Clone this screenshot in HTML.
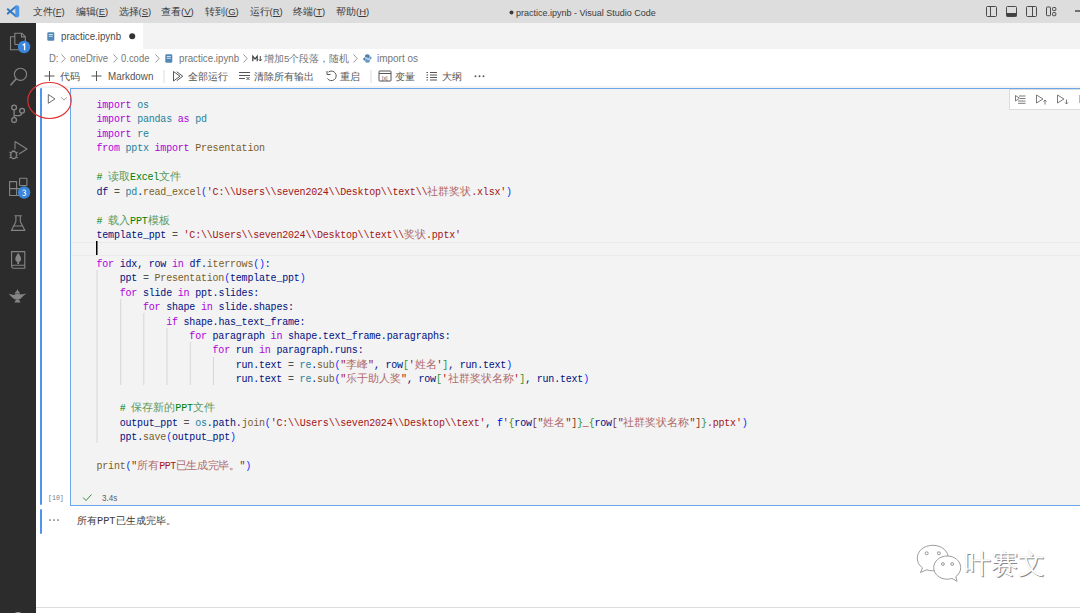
<!DOCTYPE html>
<html><head><meta charset="utf-8">
<style>
*{margin:0;padding:0;box-sizing:border-box}
html,body{width:1080px;height:613px;overflow:hidden;background:#fff;font-family:"Liberation Sans",sans-serif;position:relative}
.abs{position:absolute}
svg{position:absolute;overflow:visible}
#title{left:0;top:0;width:1080px;height:23px;background:#dddddd}
.menu{position:absolute;top:6px;font-size:9.5px;line-height:11px;color:#3b3b3b;white-space:nowrap}
.menu u{text-decoration:none;border-bottom:1px solid #3b3b3b;line-height:8px;display:inline-block}
#wtitle{left:516px;top:7px;font-size:9.6px;transform:scaleX(0.9375);transform-origin:0 0;line-height:11px;color:#3b3b3b;white-space:nowrap}
#act{left:0;top:23px;width:36px;height:590px;background:#2c2c2c}
#tabs{left:36px;top:23px;width:1044px;height:26px;background:#f3f3f3}
#tab1{left:36px;top:23px;width:107px;height:26px;background:#fff}
.ui{position:absolute;font-size:9.6px;line-height:11px;color:#767676;white-space:nowrap}
.tb{position:absolute;font-size:9.6px;line-height:11px;color:#555555;white-space:nowrap}
#toolbarline{left:36px;top:86px;width:1044px;height:2px;background:#f3f3f3}
#leftbar1{left:39.5px;top:88px;width:2.5px;height:417px;background:#4e95ee;border-radius:1px}
#leftbar2{left:39.5px;top:509px;width:2.5px;height:25px;background:#4e95ee;border-radius:1px}
#cell{left:70px;top:88px;width:1010px;height:418px;background:#f3f3f3;border-top:1px solid #6aa6ea;border-left:1px solid #6aa6ea;border-bottom:1px solid #6aa6ea}
#code{left:96.5px;top:99px;font-family:"Liberation Mono",monospace;font-size:10px;line-height:14.44px;letter-spacing:-0.2px;color:#001080;white-space:pre}
i.z{font-style:normal;font-weight:300;font-size:10.55px;letter-spacing:0;line-height:0}
.c i.z{color:#5f9a5f}.s i.z{color:#b06a6a}
.k{color:#af00db}.m{color:#267f99}.s{color:#a31515}.c{color:#008000}.f{color:#795e26}.v{color:#001080}.p{color:#0431fa}.o{color:#505050}.g{color:#319331}.b{color:#7b3814}.kf{color:#0000ff}
#celltb{left:1009px;top:89px;width:80px;height:21px;background:#fff;border:1px solid #dcdcdc}
#bottomline{left:36px;top:607px;width:1044px;height:1px;background:#dcdcdc}
</style></head><body>
<div id="title" class="abs"></div>
<!-- vscode logo -->
<svg style="left:0;top:0" width="28" height="23" viewBox="0 0 28 23">
<g stroke="#3277c6" stroke-width="2" stroke-linecap="round" fill="none"><path d="M7.8 9.2 L16 16.2"/><path d="M7.8 13.6 L16 6.4"/></g>
<path d="M15.3 6.2 L17 5.2 Q19.2 5.6 19.2 7 L19.2 15.6 Q19.2 17 17 17.4 L15.3 16.4 Z" fill="#4a95e8"/>
</svg>
<div class="menu" style="left:32.5px">文件(<u>F</u>)</div>
<div class="menu" style="left:75.5px">编辑(<u>E</u>)</div>
<div class="menu" style="left:118.5px">选择(<u>S</u>)</div>
<div class="menu" style="left:161px">查看(<u>V</u>)</div>
<div class="menu" style="left:205px">转到(<u>G</u>)</div>
<div class="menu" style="left:249.5px">运行(<u>R</u>)</div>
<div class="menu" style="left:293px">终端(<u>T</u>)</div>
<div class="menu" style="left:336px">帮助(<u>H</u>)</div>
<svg style="left:509px;top:10px" width="5" height="5"><circle cx="2.5" cy="2.5" r="2" fill="#3b3b3b"/></svg>
<div id="wtitle" class="abs">practice.ipynb - Visual Studio Code</div>
<!-- layout icons -->
<svg style="left:986px;top:6px" width="72" height="12" viewBox="0 0 72 12">
<g fill="none" stroke="#4a4a4a" stroke-width="1">
<rect x="0.5" y="0.5" width="10" height="10" rx="1"/><line x1="4.5" y1="0.5" x2="4.5" y2="10.5"/>
<rect x="20.5" y="0.5" width="10" height="10" rx="1"/>
<rect x="40.5" y="0.5" width="10" height="10" rx="1"/><line x1="46.5" y1="0.5" x2="46.5" y2="10.5"/>
<rect x="60.5" y="1" width="4" height="8.7" rx="0.8"/><rect x="66.6" y="1.5" width="3.2" height="3.1" rx="0.7"/><rect x="66.6" y="6.6" width="3.2" height="3.1" rx="0.7"/>
</g>
<rect x="20.5" y="7" width="10" height="3.5" fill="#424242"/>
</svg>
<div class="abs" style="left:1075px;top:10.4px;width:5px;height:1.3px;background:#707070"></div>
<div id="act" class="abs"></div>
<div id="tabs" class="abs"></div>
<div id="tab1" class="abs"></div>
<!-- activity bar icons -->
<svg style="left:0;top:23px" width="36" height="590" viewBox="0 23 36 590">
<g fill="none" stroke="#858585" stroke-width="1.1" stroke-linejoin="round">
<!-- explorer -->
<path d="M14.8 44.5 L14.8 33.2 L21.8 33.2 L25.3 36.7 L25.3 41"/>
<path d="M21.5 33.5 L21.5 36.9 L25 36.9"/>
<path d="M14.8 44.5 L18.5 44.5"/>
<path d="M14.5 36.8 L10.5 36.8 L10.5 49.8 L19 49.8"/>
<!-- search -->
<circle cx="20.5" cy="74.3" r="6.1"/>
<path d="M16.3 78.8 L10.5 85.3" stroke-width="1.5"/>
<!-- source control -->
<g stroke-width="1.3"><circle cx="14.1" cy="107.5" r="2.4"/>
<circle cx="14.1" cy="120.1" r="2.4"/>
<circle cx="22.1" cy="110.8" r="2.4"/>
<path d="M14.1 110 L14.1 117.6"/>
<path d="M21.8 113.2 Q21.3 115.6 19 115.6 L14.5 115.6"/></g>
<!-- run debug -->
<path d="M15 141.5 L27 149 L19 154"/>
<path d="M15 141.5 L15 149.3"/>
<ellipse cx="13.6" cy="155" rx="2.8" ry="3.6"/>
<path d="M9.5 152 L11 153 M9.5 155 L11 155 M9.5 158 L11 157 M17.7 152 L16.2 153 M17.7 155 L16.2 155 M17.7 158 L16.2 157 M12 151 L15 151"/>
<!-- extensions -->
<path d="M9.6 181.6 L16.6 181.6 L16.6 188.6 L23 188.6 L23 195.5 L9.6 195.5 Z M9.6 188.6 L16.6 188.6 L16.6 195.5"/>
<rect x="19.6" y="178.3" width="7.3" height="7.2" rx="0.6"/>
<!-- flask -->
<path d="M15.9 216 L15.9 221.5 L11.4 230.4 L24.9 230.4 L20.3 221.5 L20.3 216 M14.5 215.8 L21.8 215.8 M13.4 226 L22.9 226"/>
<!-- book -->
<path d="M11.6 251.6 L24.8 251.6 L24.8 268.2 L13.2 268.2 Q11.6 268.2 11.6 266.6 Z M11.6 266.3 Q11.6 265.3 13.2 265.3 L24.8 265.3"/>
</g>
<g fill="#858585">
<path d="M18.2 253 Q15.3 256.5 15.3 259 Q15.3 261.8 18.2 262.2 Q21.1 261.8 21.1 259 Q21.1 256.5 18.2 253 Z"/>
<path d="M17.7 261.5 L18.7 261.5 L19.3 264 L17.1 264 Z"/>
<!-- lamp -->
<path d="M17.5 289 L18.3 291 Q20 292 20 293.5 L14.5 293.5 Q15 292 16.7 291 Z"/>
<path d="M8.8 293.8 Q11.5 294.8 14 295 Q15.5 293.8 17.5 293.8 Q19.5 293.8 21 294.6 Q24 294.2 26.6 293.6 Q23.5 295.3 22.3 297 Q20.8 299.6 17.5 299.6 Q13.8 299.6 12.3 297.4 Q10.5 296.3 8.8 293.8 Z"/>
<path d="M16 299.5 L19 299.5 L20.5 302.5 L14.5 302.5 Z"/>
</g>
<ellipse cx="18" cy="615.5" rx="4" ry="3.5" fill="#a0a0a0"/>
<!-- badges -->
<circle cx="24.1" cy="47" r="6.2" fill="#3a86dc"/>
<path d="M22.6 45.3 L24.6 44 L24.6 50.3" fill="none" stroke="#fff" stroke-width="1.3"/>
<circle cx="24.1" cy="192.5" r="6.2" fill="#3a86dc"/>
<path d="M22.6 190.7 Q23.3 190 24.2 190 Q25.7 190 25.7 191.3 Q25.7 192.6 23.9 192.6 Q25.9 192.6 25.9 194.1 Q25.9 195.6 24.1 195.6 Q23.1 195.6 22.5 195" fill="none" stroke="#fff" stroke-width="1"/>
</svg>
<!-- tab -->
<svg style="left:47px;top:31.5px" width="8" height="9" viewBox="0 0 8 9"><rect x="0.3" y="0.3" width="7" height="8.4" rx="1.2" fill="#5288b6"/><rect x="1.8" y="2" width="4" height="0.9" fill="#dde8f2"/><rect x="1.8" y="3.8" width="4" height="0.9" fill="#dde8f2"/></svg>
<div class="ui" style="left:61px;top:31px;font-size:11px;color:#4a4a4a;transform:scaleX(0.885);transform-origin:0 0">practice.ipynb</div>
<svg style="left:129px;top:33px" width="7" height="7"><circle cx="3.2" cy="3.2" r="3" fill="#333"/></svg>
<!-- breadcrumb -->
<div class="ui" style="left:48.5px;top:53px;font-size:11px;transform:scaleX(0.86);transform-origin:0 0">D:</div>
<div class="ui" style="left:70px;top:53px;font-size:11px;transform:scaleX(0.865);transform-origin:0 0">oneDrive</div>
<div class="ui" style="left:121px;top:53px;font-size:11px;transform:scaleX(0.86);transform-origin:0 0">0.code</div>
<svg style="left:165px;top:53.5px" width="8" height="9" viewBox="0 0 8 9"><rect x="0.3" y="0.3" width="7" height="8.4" rx="1.2" fill="#5288b6"/><rect x="1.8" y="2" width="4" height="0.9" fill="#dde8f2"/><rect x="1.8" y="3.8" width="4" height="0.9" fill="#dde8f2"/></svg>
<div class="ui" style="left:178.5px;top:53px;font-size:11px;transform:scaleX(0.887);transform-origin:0 0">practice.ipynb</div>
<svg style="left:251.5px;top:55px" width="12" height="8" viewBox="0 0 12 8"><path d="M0.8 6.3 L0.8 1.2 L3 4 L5.2 1.2 L5.2 6.3" fill="none" stroke="#3b3b3b" stroke-width="1.2"/><path d="M8.3 1 L8.3 5.8 M6.8 4.3 L8.3 6 L9.8 4.3" fill="none" stroke="#3b3b3b" stroke-width="0.9"/></svg>
<div class="ui" style="left:264px;top:52.5px;font-size:9.75px">增加5个段落，随机</div>
<svg style="left:363px;top:54px" width="9" height="9" viewBox="0 0 9 9"><path d="M4.3 0.3 Q2 0.3 2 1.8 L2 3 L4.5 3 L4.5 3.5 L1.3 3.5 Q0.2 3.6 0.2 5 Q0.2 6.6 1.4 6.6 L2 6.6 L2 5.3 Q2 4.2 3.2 4.2 L5.6 4.2 Q6.7 4.2 6.7 3.1 L6.7 1.8 Q6.7 0.3 4.3 0.3 Z" fill="#4e7fae"/><path d="M4.5 8.7 Q6.8 8.7 6.8 7.2 L6.8 6 L4.3 6 L4.3 5.5 L7.5 5.5 Q8.6 5.4 8.6 4 Q8.6 2.4 7.4 2.4 L6.8 2.4 L6.8 3.7 Q6.8 4.8 5.6 4.8 L3.2 4.8 Q2.1 4.8 2.1 5.9 L2.1 7.2 Q2.1 8.7 4.5 8.7 Z" fill="#6a9cc6"/></svg>
<div class="ui" style="left:376.5px;top:53px;font-size:11px;transform:scaleX(0.905);transform-origin:0 0">import os</div>
<svg style="left:0;top:0" width="1080" height="100">
<g fill="none" stroke="#8a8a8a" stroke-width="0.9">
<path d="M61.5 54.5 L65.2 58.5 L61.5 62.5"/>
<path d="M113.5 54.5 L117.2 58.5 L113.5 62.5"/>
<path d="M155.5 54.5 L159.2 58.5 L155.5 62.5"/>
<path d="M243.5 54.5 L247.2 58.5 L243.5 62.5"/>
<path d="M353.5 54.5 L357.2 58.5 L353.5 62.5"/>
</g>
</svg>
<!-- toolbar -->
<div id="toolbarline" class="abs"></div>
<svg style="left:0;top:0" width="1080" height="100">
<g fill="none" stroke="#555" stroke-width="1">
<path d="M49.5 71 L49.5 81 M44.5 76 L54.5 76"/>
<path d="M96.5 71 L96.5 81 M91.5 76 L101.5 76"/>
<path d="M173.5 71.5 L173.5 81 L180 76.25 Z M176.8 71.8 L182.8 76.25 L176.8 80.7"/>
<path d="M239 72.5 L250 72.5 M239 75.5 L250 75.5 M239 78.5 L245 78.5 M246.5 77 L249.5 80 M249.5 77 L246.5 80"/>
<path d="M328.5 72 A4.8 4.8 0 1 1 327.4 78.5 M327 71 L327 74.5 L330.5 74.5"/>
<rect x="379" y="71" width="12" height="10" rx="0.5"/><path d="M379 73.5 L391 73.5"/>
<path d="M430 72.5 L437 72.5 M430 75 L437 75 M430 77.5 L437 77.5 M430 80 L437 80 M426.5 72.5 L428 72.5 M426.5 75 L428 75 M426.5 77.5 L428 77.5 M426.5 80 L428 80"/>
</g>
<path d="M164 70 L164 83 M371 70 L371 83" stroke="#dcdcdc" stroke-width="1"/>
<g fill="#555"><circle cx="475.5" cy="76.3" r="0.95"/><circle cx="479.5" cy="76.3" r="0.95"/><circle cx="483.5" cy="76.3" r="0.95"/></g>
<text x="382" y="79.5" font-family="Liberation Sans" font-size="5" fill="#424242">[x]</text>
</svg>
<div class="tb" style="left:60px;top:70.5px;font-size:9.5px">代码</div>
<div class="tb" style="left:107.5px;top:70.5px;font-size:11px;transform:scaleX(0.895);transform-origin:0 0">Markdown</div>
<div class="tb" style="left:187.5px;top:70.5px;font-size:9.6px">全部运行</div>
<div class="tb" style="left:254px;top:70.5px;font-size:9.8px">清除所有输出</div>
<div class="tb" style="left:340px;top:70.5px;font-size:10px">重启</div>
<div class="tb" style="left:394.5px;top:70.5px;font-size:9.7px">变量</div>
<div class="tb" style="left:441.5px;top:70.5px;font-size:9.7px">大纲</div>
<div id="leftbar1" class="abs"></div>
<div id="leftbar2" class="abs"></div>
<div id="cell" class="abs"></div>
<!-- line highlight -->
<div class="abs" style="left:71px;top:241.5px;width:1009px;height:14.5px;border-top:1px solid #eaeaea;border-bottom:1px solid #eaeaea"></div>
<!-- indent guides -->
<svg style="left:0;top:0" width="1080" height="613">
<g stroke="#d6d6d6" stroke-width="1">
<path d="M97 270 L97 443"/>
<path d="M120.7 299 L120.7 385"/>
<path d="M143.8 313 L143.8 385"/>
<path d="M167 328 L167 385"/>
<path d="M190.3 342 L190.3 385"/>
<path d="M213.5 357 L213.5 385"/>
</g>
<!-- cursor -->
<rect x="96" y="241" width="1.5" height="14" fill="#000"/>
<!-- run button -->
<path d="M48.3 94.5 L48.3 103.3 L55 98.9 Z" fill="none" stroke="#6c6c6c" stroke-width="1" stroke-linejoin="miter"/>
<path d="M61 97.3 L64 100 L67 97.3" fill="none" stroke="#8a8a8a" stroke-width="0.8"/>
<!-- red circle -->
<ellipse cx="49.5" cy="100.5" rx="21.7" ry="18" fill="none" stroke="#e52f2f" stroke-width="1.1"/>
<!-- check -->
<path d="M83 497.5 L86 500.5 L91.5 494.5" fill="none" stroke="#388a34" stroke-width="1"/>
<!-- output dots -->
<g fill="#616161"><circle cx="50" cy="520" r="0.85"/><circle cx="54" cy="520" r="0.85"/><circle cx="58" cy="520" r="0.85"/></g>
</svg>
<div id="celltb" class="abs"></div>
<svg style="left:0;top:0" width="1080" height="613">
<g fill="none" stroke="#6c6c6c" stroke-width="0.9">
<path d="M1015.5 95.5 L1015.5 101 L1019.5 98.2 Z M1019 96 L1025.5 96 M1020 98.5 L1025.5 98.5 M1018 101 L1025.5 101 M1018 103.3 L1025.5 103.3"/>
<path d="M1036.5 95 L1036.5 103 L1043 99 Z M1045 100 L1045 104.5 M1043.5 101.5 L1045 100 L1046.5 101.5"/>
<path d="M1057.5 95 L1057.5 103 L1064 99 Z M1066.5 99.5 L1066.5 104 M1065 102.5 L1066.5 104 L1068 102.5"/>
<path d="M1079.5 95 L1079.5 103" stroke="#b0b0b0"/>
</g>
</svg>
<div class="abs" style="left:48.3px;top:493.5px;font-family:'Liberation Mono',monospace;font-size:7.3px;line-height:9px;color:#7a7a7a;transform:scaleX(0.9);transform-origin:0 0">[10]</div>
<div class="abs" style="left:101.5px;top:493px;font-size:8.8px;line-height:10px;color:#616161;transform:scaleX(0.92);transform-origin:0 0">3.4s</div>
<div class="abs" style="left:77px;top:515px;font-family:'Liberation Mono',monospace;font-size:10.3px;font-weight:300;line-height:12px;color:#3b3b3b;white-space:nowrap">所有PPT已生成完毕。</div>
<!-- watermark -->
<svg style="left:915px;top:543px" width="48" height="40" viewBox="0 0 48 40">
<g fill="#fff" stroke="#9c9c9c" stroke-width="1">
<path d="M17.8 2.3 C8.5 2.3 2.3 8.2 2.3 15.3 C2.3 19.3 4.3 22.6 7.5 24.8 L5.5 29.5 L11.8 26.8 C13.6 27.4 15.6 27.8 17.8 27.8 C27 27.8 33.3 22 33.3 15.1 C33.3 8.2 27 2.3 17.8 2.3 Z"/>
<path d="M32.2 13 C24.6 13 18.7 18.2 18.7 24.6 C18.7 31 24.6 36.2 32.2 36.2 C33.8 36.2 35.4 36 36.9 35.4 L42 38.3 L40.8 33.6 C43.8 31.5 45.7 28.3 45.7 24.6 C45.7 18.2 39.8 13 32.2 13 Z"/>
</g>
<g fill="#fff" stroke="#8c8c8c" stroke-width="0.9">
<circle cx="11.7" cy="10.3" r="1.5"/><circle cx="23.9" cy="10.3" r="1.5"/>
<circle cx="27.9" cy="21" r="1.4"/><circle cx="37.2" cy="21" r="1.4"/>
</g>
</svg>
<div class="abs" style="left:964px;top:547.5px;font-size:27px;font-weight:300;line-height:32px;color:#fff;white-space:nowrap;text-shadow:0.8px 0.8px 0 #8a8a8a,-0.4px -0.4px 0 #cfcfcf">叶赛文</div>
<div id="bottomline" class="abs"></div>
<div id="code" class="abs"><span class="k">import</span> <span class="m">os</span>
<span class="k">import</span> <span class="m">pandas</span> <span class="k">as</span> <span class="m">pd</span>
<span class="k">import</span> <span class="m">re</span>
<span class="k">from</span> <span class="m">pptx</span> <span class="k">import</span> <span class="f">Presentation</span>

<span class="c"># <i class="z">读取</i>Excel<i class="z">文件</i></span>
<span class="v">df</span> <span class="o">=</span> <span class="m">pd</span>.<span class="f">read_excel</span><span class="p">(</span><span class="s">'C:\\Users\\seven2024\\Desktop\\text\\<i class="z">社群奖状</i>.xlsx'</span><span class="p">)</span>

<span class="c"># <i class="z">载入</i>PPT<i class="z">模板</i></span>
<span class="v">template_ppt</span> <span class="o">=</span> <span class="s">'C:\\Users\\seven2024\\Desktop\\text\\<i class="z">奖状</i>.pptx'</span>

<span class="k">for</span> <span class="v">idx</span>, <span class="v">row</span> <span class="k">in</span> <span class="v">df</span>.<span class="f">iterrows</span><span class="p">()</span>:
    <span class="v">ppt</span> <span class="o">=</span> <span class="f">Presentation</span><span class="p">(</span><span class="v">template_ppt</span><span class="p">)</span>
    <span class="k">for</span> <span class="v">slide</span> <span class="k">in</span> <span class="v">ppt</span>.<span class="v">slides</span>:
        <span class="k">for</span> <span class="v">shape</span> <span class="k">in</span> <span class="v">slide</span>.<span class="v">shapes</span>:
            <span class="k">if</span> <span class="v">shape</span>.<span class="v">has_text_frame</span>:
                <span class="k">for</span> <span class="v">paragraph</span> <span class="k">in</span> <span class="v">shape</span>.<span class="v">text_frame</span>.<span class="v">paragraphs</span>:
                    <span class="k">for</span> <span class="v">run</span> <span class="k">in</span> <span class="v">paragraph</span>.<span class="v">runs</span>:
                        <span class="v">run</span>.<span class="v">text</span> <span class="o">=</span> <span class="m">re</span>.<span class="f">sub</span><span class="p">(</span><span class="s">"<i class="z">李峰</i>"</span>, <span class="v">row</span><span class="g">[</span><span class="s">'<i class="z">姓名</i>'</span><span class="g">]</span>, <span class="v">run</span>.<span class="v">text</span><span class="p">)</span>
                        <span class="v">run</span>.<span class="v">text</span> <span class="o">=</span> <span class="m">re</span>.<span class="f">sub</span><span class="p">(</span><span class="s">"<i class="z">乐于助人奖</i>"</span>, <span class="v">row</span><span class="g">[</span><span class="s">'<i class="z">社群奖状名称</i>'</span><span class="g">]</span>, <span class="v">run</span>.<span class="v">text</span><span class="p">)</span>

    <span class="c"># <i class="z">保存新的</i>PPT<i class="z">文件</i></span>
    <span class="v">output_ppt</span> <span class="o">=</span> <span class="m">os</span>.<span class="v">path</span>.<span class="f">join</span><span class="p">(</span><span class="s">'C:\\Users\\seven2024\\Desktop\\text'</span>, <span class="kf">f</span><span class="s">'</span><span class="g">{</span><span class="v">row</span><span class="b">[</span><span class="s">"<i class="z">姓名</i>"</span><span class="b">]</span><span class="g">}</span><span class="s">_</span><span class="g">{</span><span class="v">row</span><span class="b">[</span><span class="s">"<i class="z">社群奖状名称</i>"</span><span class="b">]</span><span class="g">}</span><span class="s">.pptx'</span><span class="p">)</span>
    <span class="v">ppt</span>.<span class="f">save</span><span class="p">(</span><span class="v">output_ppt</span><span class="p">)</span>

<span class="f">print</span><span class="p">(</span><span class="s">"<i class="z">所有</i><span style="letter-spacing:-0.45px">PPT</span><i class="z" style="letter-spacing:-0.4px">已生成完毕。</i>"</span><span class="p">)</span></div>
</body></html>
